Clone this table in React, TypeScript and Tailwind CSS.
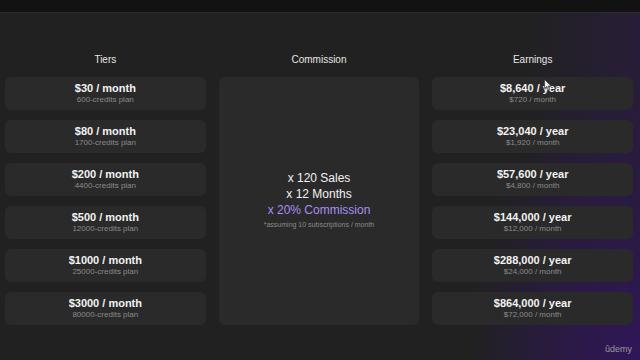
import React from "react";

const tiers = [
  { price: "$30 / month", plan: "600-credits plan" },
  { price: "$80 / month", plan: "1700-credits plan" },
  { price: "$200 / month", plan: "4400-credits plan" },
  { price: "$500 / month", plan: "12000-credits plan" },
  { price: "$1000 / month", plan: "25000-credits plan" },
  { price: "$3000 / month", plan: "80000-credits plan" },
];

const earnings = [
  { year: "$8,640 / year", month: "$720 / month" },
  { year: "$23,040 / year", month: "$1,920 / month" },
  { year: "$57,600 / year", month: "$4,800 / month" },
  { year: "$144,000 / year", month: "$12,000 / month" },
  { year: "$288,000 / year", month: "$24,000 / month" },
  { year: "$864,000 / year", month: "$72,000 / month" },
];

const Card: React.FC<{ title: string; sub: string }> = ({ title, sub }) => (
  <div className="h-[33px] rounded-md bg-[#2a2a2b] flex flex-col items-center justify-center">
    <div className="text-[11px] leading-[13px] font-bold text-[#f2f2f2]">{title}</div>
    <div className="text-[8px] leading-[10px] text-[#8a8a8a]">{sub}</div>
  </div>
);

const Header: React.FC<{ label: string }> = ({ label }) => (
  <div className="h-[14px] mb-[10px] text-center text-[10px] leading-[14px] text-[#e6e6e6]">
    {label}
  </div>
);

const App: React.FC = () => {
  return (
    <div
      className="w-[640px] h-[360px] overflow-hidden flex flex-col bg-[#212121] relative"
      style={{ fontFamily: "'Liberation Sans', Arial, sans-serif" }}
    >
      <div className="h-[13px] bg-[#121212] border-b border-[#2c2c2c] shrink-0" />
      <div className="flex-1 relative bg-[radial-gradient(ellipse_170px_300px_at_100%_100%,#30165a_0%,#2a1a44_45%,rgba(33,33,33,0)_100%),linear-gradient(90deg,#212121_0%,#212121_82%,#281d38_100%)]">
        <div className="grid grid-cols-3 gap-[13px] pl-[5px] pr-[7px] pt-[40px]">
          <div>
            <Header label="Tiers" />
            <div className="flex flex-col gap-[10px]">
              {tiers.map((t) => (
                <Card key={t.price} title={t.price} sub={t.plan} />
              ))}
            </div>
          </div>
          <div className="flex flex-col">
            <Header label="Commission" />
            <div className="h-[248px] rounded-md bg-[#2a2a2b] flex flex-col items-center justify-center">
              <div className="text-[12px] leading-[16px] text-[#f2f2f2]">x 120 Sales</div>
              <div className="text-[12px] leading-[16px] text-[#f2f2f2]">x 12 Months</div>
              <div className="text-[12px] leading-[16px] text-[#a98ef0]">x 20% Commission</div>
              <div className="text-[7px] leading-[14px] text-[#8a8a8a]">
                *assuming 10 subscriptions / month
              </div>
            </div>
          </div>
          <div>
            <Header label="Earnings" />
            <div className="flex flex-col gap-[10px]">
              {earnings.map((e) => (
                <Card key={e.year} title={e.year} sub={e.month} />
              ))}
            </div>
          </div>
        </div>
        <div className="absolute right-[8px] bottom-[4px] text-[9px] text-[#9a9a9a]">ûdemy</div>
        <svg
          className="absolute left-[544px] top-[66px]"
          width="8"
          height="12"
          viewBox="0 0 8 12"
        >
          <path d="M0.5 0.5 L0.5 9.5 L2.8 7.4 L4.4 11 L5.6 10.4 L4.1 7 L7.2 7 Z" fill="#f0f0f0" stroke="#222" strokeWidth="0.6" />
        </svg>
      </div>
    </div>
  );
};

export default App;
